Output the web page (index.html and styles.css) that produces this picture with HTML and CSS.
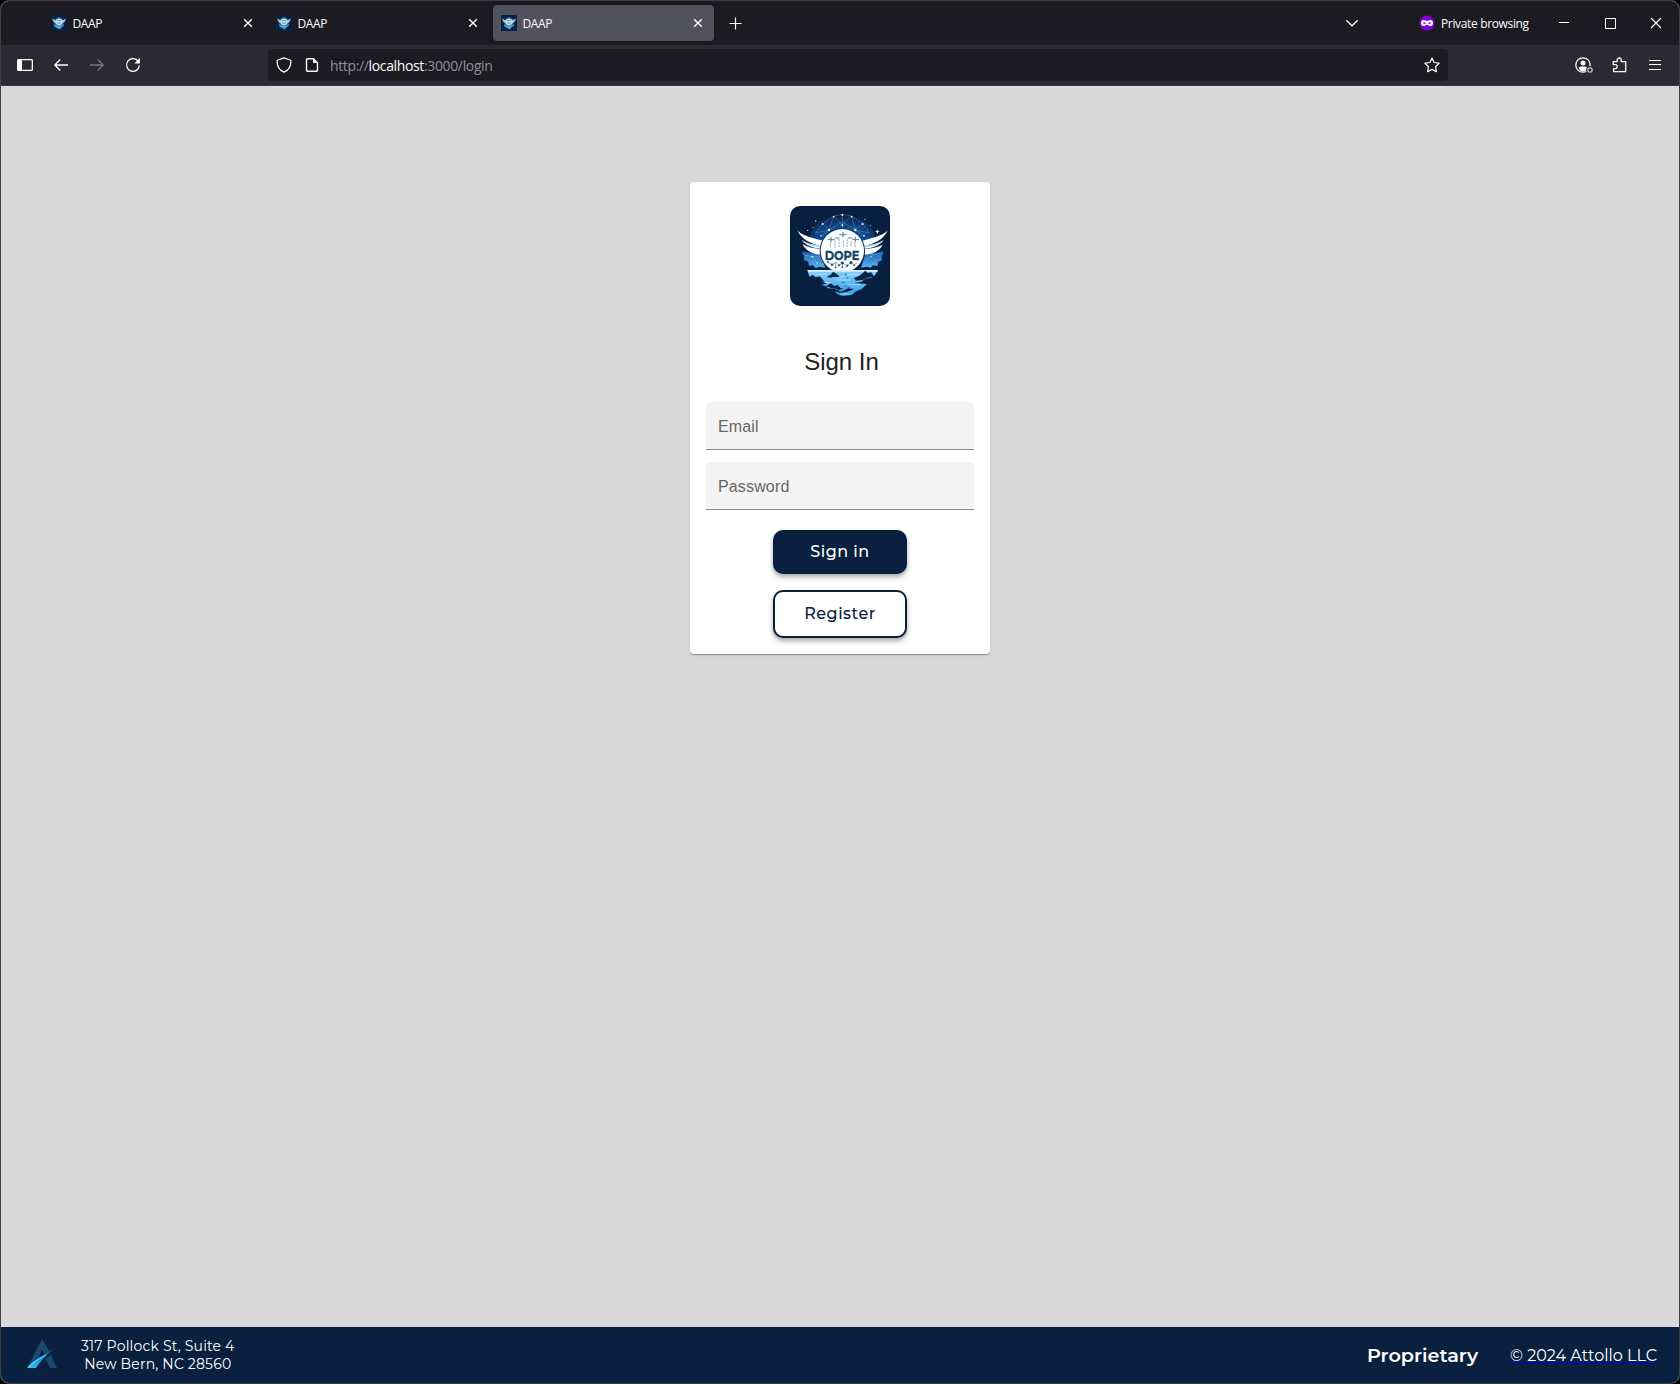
FILE: index.html
```html
<!DOCTYPE html>
<html lang="en">
<head>
<meta charset="utf-8">
<title>DAAP</title>
<link rel="stylesheet" href="styles.css">
</head>
<body>
<svg class="defs" width="0" height="0" aria-hidden="true">
  <symbol id="favicon" viewBox="0 0 16 16">
    <path fill="#08213f" d="M0 0h16v16H0z"/>
    <path fill="#1c5f96" d="M4 4l4-2.500L12 4l1 6-4 4H7l-4-4z"/>
    <path fill="#a9c5d8" d="M1 3.500l4 2h6l4-2-1.500 3.500L11 8.500H5L2.500 7z"/>
    <circle cx="8" cy="7" r="3.400" fill="#c5dbe6"/>
    <path fill="#4aa5dc" d="M3 9l2 1.500h6L13 9l-.5 2-2.500 1.500L9 14.500l-2-1L3.500 11.500z"/>
    <path stroke="#6f9ab5" d="M6 5.500h4M6 8h4"/>
  </symbol>
  <symbol id="close" viewBox="0 0 10 10"><path d="M1.200 1.200l7.600 7.600M8.800 1.200L1.200 8.800" fill="none" stroke="#fbfbfe" stroke-width="1.400"/></symbol>
</svg>
<div class="window">
  <header class="tabstrip">
    <div class="tabs">
      <div class="tab"><svg class="fav"><use href="#favicon"/></svg><span class="tab-label">DAAP</span><svg class="tab-close"><use href="#close"/></svg></div>
      <div class="tab"><svg class="fav"><use href="#favicon"/></svg><span class="tab-label">DAAP</span><svg class="tab-close"><use href="#close"/></svg></div>
      <div class="tab active"><svg class="fav"><use href="#favicon"/></svg><span class="tab-label">DAAP</span><svg class="tab-close"><use href="#close"/></svg></div>
      <svg class="new-tab" width="13" height="13" viewBox="0 0 13 13"><path d="M6.500.5v12M.5 6.500h12" stroke="#fbfbfe" stroke-width="1.200"/></svg>
    </div>
    <div class="controls">
      <svg class="chevron" width="14" height="8" viewBox="0 0 14 8"><path d="M1.200 1.200L7 6.800l5.800-5.600" fill="none" stroke="#fbfbfe" stroke-width="1.200"/></svg>
      <svg class="mask" width="16" height="16" viewBox="0 0 16 16"><circle cx="8" cy="8" r="7.500" fill="#8000d7"/><path fill="#fff" fill-rule="evenodd" d="M4.500 5C6 5 7 6 8 6s2-1 3.500-1S14 6 14 8s-1 3-2.500 3S9 9.700 8 9.700 6 11 4.500 11 2 10 2 8s1-3 2.500-3zM4 8.200c.7 1 2 1 2.700 0-.7-1.200-2-1.200-2.700 0zm5.300 0c.7 1 2 1 2.700 0-.7-1.200-2-1.200-2.700 0z"/></svg>
      <span class="private">Private browsing</span>
      <svg class="wc min" width="10" height="10" viewBox="0 0 10 10"><path d="M0 4.500h10" stroke="#fff"/></svg>
      <svg class="wc max" width="11" height="11" viewBox="0 0 11 11"><path d="M.5.5h10v10H.5z" fill="none" stroke="#fff"/></svg>
      <svg class="wc" width="12" height="12" viewBox="0 0 12 12"><path d="M1 1l10 10M11 1L1 11" stroke="#fff" stroke-width="1.100"/></svg>
    </div>
  </header>
  <nav class="toolbar">
    <div class="nav-icons">
      <svg width="16" height="16" viewBox="0 0 16 16"><path fill="#fbfbfe" fill-rule="evenodd" d="M1.500 2h13A1.500 1.500 0 0 1 16 3.500v9a1.500 1.500 0 0 1-1.500 1.500h-13A1.500 1.500 0 0 1 0 12.500v-9A1.500 1.500 0 0 1 1.500 2zM5 3.200v9.600h9.700V3.200z"/></svg>
      <svg width="16" height="16" viewBox="0 0 16 16"><path d="M15 8H1.800M7.300 2.500L1.800 8l5.500 5.500" fill="none" stroke="#fbfbfe" stroke-width="1.300"/></svg>
      <svg width="16" height="16" viewBox="0 0 16 16"><path d="M1 8h13.200M8.700 2.500L14.200 8l-5.500 5.500" fill="none" stroke="#77767e" stroke-width="1.300"/></svg>
      <svg width="16" height="16" viewBox="0 0 16 16"><path d="M13.300 4.300A6.400 6.400 0 1 0 14.400 8.500" fill="none" stroke="#fbfbfe" stroke-width="1.300"/><path fill="#fbfbfe" d="M15 .8v5.700H9.300z"/></svg>
    </div>
    <div class="urlbar">
      <svg width="16" height="16" viewBox="0 0 16 16"><path d="M8 .8l6 2.200c.7.300.9.600.9 1.200 0 4.500-2.500 9.100-6.900 11C3.600 13.300 1.100 8.700 1.100 4.200c0-.6.200-.9.900-1.200z" fill="none" stroke="#fbfbfe" stroke-width="1.300"/></svg>
      <svg class="page-icon" width="14" height="16" viewBox="0 0 14 16"><path d="M8.300 1.700H2.500a1 1 0 0 0-1 1v10.600a1 1 0 0 0 1 1h9a1 1 0 0 0 1-1V5.800z" fill="none" stroke="#fbfbfe" stroke-width="1.400"/><path fill="#fbfbfe" d="M8 1.500L12.800 6H8z"/></svg>
      <span class="url">http://<b>localhost</b>:3000/login</span>
      <svg class="star" width="16" height="16" viewBox="0 0 16 16"><path d="M8 1l2.100 4.500 5 .7-3.600 3.500.9 5L8 12.400l-4.400 2.300.9-5L.9 6.200l5-.7z" fill="none" stroke="#fbfbfe" stroke-width="1.200" stroke-linejoin="round"/></svg>
    </div>
    <div class="tools">
      <svg width="18" height="16" viewBox="0 0 18 16"><circle cx="8" cy="8" r="7.200" fill="none" stroke="#fbfbfe" stroke-width="1.300"/><circle cx="8" cy="6" r="2.500" fill="#fbfbfe"/><path fill="#fbfbfe" d="M3.500 10.500C5 9.200 11 9.200 12 10.500l-1 3-3 1-3-1z"/><circle cx="15" cy="13" r="3.800" fill="#2b2a33"/><circle cx="15" cy="13" r="2.200" fill="none" stroke="#c5c4ca" stroke-width="1.200"/></svg>
      <svg width="16" height="16" viewBox="0 0 16 16"><path d="M1.200 4.600h4V3a2 2 0 0 1 4 0v1.600h4.500v10.100H1.600v-3h1.600a2 2 0 0 0 0-4H1.200z" fill="none" stroke="#fbfbfe" stroke-width="1.300" stroke-linejoin="round"/></svg>
      <svg width="14" height="16" viewBox="0 0 14 16"><path d="M1 3.500h12M1 7.500h12M1 12.500h12" stroke="#fbfbfe" stroke-width="1.200"/></svg>
    </div>
  </nav>
  <main class="page">
    <form class="card">
      <svg class="logo" viewBox="30 30 300 300" role="img" aria-label="DOPE logo">
        <defs>
          <radialGradient id="dome" cx=".5" cy=".75" r=".72"><stop offset="0" stop-color="#1f73ca"/><stop offset=".55" stop-color="#0d4384"/><stop offset="1" stop-color="#08203f"/></radialGradient>
          <linearGradient id="sea" x1="0" y1="0" x2="0" y2="1"><stop offset="0" stop-color="#8bd0fb"/><stop offset="1" stop-color="#359ee9"/></linearGradient>
          <linearGradient id="cloud" x1="0" y1="0" x2="0" y2="1"><stop offset="0" stop-color="#195da7"/><stop offset="1" stop-color="#5ab5f7"/></linearGradient>
        </defs>
        <path fill="#08203f" d="M30 30h300v300H30z"/>
        <path fill="url(#dome)" d="M88 128C97 80 140 55 187 55s89 25 99 73l-32 23H120z"/>
        <path fill="none" stroke="#a2c7e6" stroke-opacity=".75" stroke-width="1.200" d="M107 111l21-27 33-24 26-5 28 5 33 23 20 28-42-9-39-24-40 24-40 9M128 84l19 18 14-42 26 27 28-27 11 42 22-19M187 55v60M147 102l-24 18M226 102l26 18"/>
        <g fill="#e5f4ff"><circle cx="187" cy="57" r="3"/><circle cx="128" cy="84" r="3"/><circle cx="147" cy="102" r="3.500"/><circle cx="161" cy="62" r="2.500"/><circle cx="215" cy="62" r="2.500"/><circle cx="226" cy="102" r="3.500"/><circle cx="248" cy="84" r="3"/><circle cx="187" cy="88" r="3"/><circle cx="107" cy="75" r="2"/><circle cx="255" cy="70" r="2"/><circle cx="272" cy="88" r="1.500"/><circle cx="99" cy="94" r="1.500"/><circle cx="83" cy="103" r="2"/><circle cx="123" cy="120" r="2.500"/><circle cx="252" cy="119" r="2.500"/></g>
        <path fill="#fff" d="M292 100l2 5 5 2-5 2-2 5-2-5-5-2 5-2z"/>
        <path fill="url(#cloud)" d="M67 166l55 10 14 39-18-3-11 4-8-8-12 1-2-12-14-6 2-12-7-5zM309 166l-54 10-12 39 17-3 12 3 7-7 13 2 3-13 11-5-1-13 5-5z"/>
        <path fill="none" stroke="#a8d7fb" d="M73 177l24 5 16 21M92 182l32-2M255 200l18-22 28-5"/>
        <g fill="#c7e8ff"><circle cx="97" cy="182" r="3"/><circle cx="79" cy="180" r="1.500"/><circle cx="273" cy="182" r="2"/><circle cx="111" cy="201" r="2"/></g>
        <path fill="#fff" d="M52 103c12 14 37 22 77 31l-4 25c-27-3-46-9-60-26 15 10 37 14 57 17-28-7-56-17-70-47zM323 103c-12 14-37 22-76 31l5 25c27-3 45-9 59-26-15 10-35 14-58 17 29-7 57-17 70-47z"/>
        <path fill="#a8d8f8" d="M65 131c16 12 39 15 58 18l-1 5c-27-2-45-10-57-23zM311 131c-16 12-39 15-58 18v5c27-2 46-10 58-23z"/>
        <path fill="#fff" d="M67 143c15 11 33 13 54 16l2 17c-22-2-45-9-56-33zM308 146c-15 9-35 11-53 13l-2 17c23-2 44-9 55-30z"/>
        <circle cx="187" cy="164" r="68" fill="#0b3159"/>
        <circle cx="187" cy="164" r="65" fill="#fff"/>
        <g fill="none" stroke="#477f9f" stroke-width="3"><path d="M178 116h22M189 108v17M144 131h20M153 123v15M217 130h20M226 122v16M165 126h13M203 126h14"/><path stroke="#789bae" stroke-width="2.500" d="M151 139v15M165 133v22M177 129v24M190 134v19M201 129v24M213 135v18M225 139v15" stroke-dasharray="7 2"/></g>
        <text x="134" y="191" textLength="104" lengthAdjust="spacingAndGlyphs" class="logo-text">DOPE</text>
        <g stroke="#174c70" stroke-width="1.500" fill="#174c70"><path fill="none" d="M144 198l12 8 11-7 10 9 10-7 15 8 10-10 10 8 9-7M167 199v14M187 201v12M203 207l-8 10"/><circle cx="144" cy="198" r="2"/><circle cx="156" cy="206" r="3"/><circle cx="177" cy="208" r="2.500"/><circle cx="187" cy="201" r="4"/><circle cx="202" cy="209" r="2.500"/><circle cx="213" cy="200" r="4"/><circle cx="223" cy="208" r="2"/><circle cx="167" cy="214" r="2"/><circle cx="187" cy="214" r="2"/></g>
        <path fill="url(#sea)" d="M82 223h211l-8 15-11 7-19 4-12 9-21 3 39 3-17 16-20 8-7 8-26 4-14-3-13-10 17-1-18-8-20-1-4-6-16-4 17-4-35-17-17-5z"/>
        <path fill="#d6f0ff" d="M82 222h211v5H84z"/>
        <path fill="#082344" d="M89 244l9-8 9 8 12-3 15 16-16-1-16-8zM140 243l12-7 8-9 17 12 3 5-17-2-12 3zM139 270l13-8 12 9 7-5 11 10 9 2-15 4-8-4-12-1zM222 246l17-7 17-15 8 7 9-2 10 13-19 3-17 7-20 2zM162 283l20 4 22-10 18 2-19 8-24 4z"/>
        <path fill="none" stroke="#d8f2ff" stroke-width="1.800" d="M109 235h28M189 236h45M171 252h39M135 260h19M203 266h39M180 294h31M174 243h18"/>
        <path fill="none" stroke="#1269a6" stroke-width="3" d="M193 235h8M199 246h6M186 259h8M203 274h7M193 270h6"/>
      </svg>
      <h1>Sign In</h1>
      <div class="field">Email</div>
      <div class="field">Password</div>
      <button type="button" class="btn primary">Sign in</button>
      <button type="button" class="btn outline">Register</button>
    </form>
  </main>
  <footer class="footer">
    <svg class="company" width="30" height="30" viewBox="0 0 30 30">
      <defs><linearGradient id="swoosh" x1="0" y1="1" x2="1" y2="0"><stop offset="0" stop-color="#35c6f5"/><stop offset=".5" stop-color="#168bd8"/><stop offset="1" stop-color="#12537c"/></linearGradient></defs>
      <path fill="#194b6c" d="M15 0L2 25l9.500-6L15 10.500l2.500 5 5-3.500zM18.500 19.500L24 16l6 13h-7z"/>
      <path fill="url(#swoosh)" d="M0 29C5 21.500 15 17 27.500 9.500 22 14 15 20 9 29z"/>
      <path fill="none" stroke="#8be6ff" stroke-width=".8" d="M1 28.500C6 23.500 12 20 19 16"/>
    </svg>
    <address><span>317 Pollock St, Suite 4</span><span>New Bern, NC 28560</span></address>
    <strong>Proprietary</strong>
    <a href="#">© 2024 Attollo LLC</a>
  </footer>
</div>
</body>
</html>
```
FILE: styles.css
```css
* { box-sizing: border-box; }
html, body { height: 100%; }
body { margin: 0; background: #000; overflow: hidden; font-family: "Liberation Sans", Arial, sans-serif; }
svg { display: block; flex: none; }
.defs { position: absolute; }
.window { height: 1384px; display: flex; flex-direction: column; border: 1px solid #3f3f40; border-radius: 9px; overflow: hidden; background: #d9d9d9; }

.tabstrip { height: 44px; flex: none; display: flex; justify-content: space-between; background: #1c1b22; color: #fbfbfe; font: 12px "Segoe UI", "Open Sans", sans-serif; }
.tabs { display: flex; align-items: center; gap: 4px; padding: 0 0 0 42px; }
.tab { width: 221px; height: 36px; padding: 0 11px 0 8px; display: flex; align-items: center; border-radius: 4px; }
.tab.active { background: #52525e; box-shadow: 0 0 4px rgba(0, 0, 0, .4); }
.fav { width: 16px; height: 16px; }
.tab-label { margin-left: 5.5px; flex: 1; letter-spacing: -.35px; }
.tab-close { width: 10px; height: 10px; }
.new-tab { margin: 1px 0 0 11px; }
.controls { display: flex; align-items: center; padding-right: 17px; }
.chevron { margin-right: 60px; }
.mask { margin-right: 6px; }
.private { width: 88px; margin-right: 30px; white-space: nowrap; letter-spacing: -.35px; }
.min { margin-right: 36px; }
.max { margin-right: 34px; }

.toolbar { height: 41px; flex: none; display: flex; align-items: center; padding-right: 17px; background: #2b2a33; border-bottom: 1px solid #38373f; }
.nav-icons { display: flex; gap: 20px; width: 267px; padding-left: 16px; }
.urlbar { width: 1180px; height: 32px; display: flex; align-items: center; padding: 0 8px; background: #1c1b22; border-radius: 4px; }
.page-icon { margin-left: 13px; }
.url { margin-left: 11px; flex: 1; color: #8f8f96; font: 14px "Segoe UI", "Open Sans", sans-serif; letter-spacing: -.36px; padding-top: 1px; }
.url b { font-weight: 400; color: #fbfbfe; }
.tools { display: flex; gap: 19px; margin-left: auto; }
.tools svg:last-child { margin-left: 1px; }

.page { flex: 1; padding-top: 96px; }
.card { width: 300px; height: 472px; margin: 0 auto; padding: 24px 16px 16px; display: flex; flex-direction: column; align-items: center; background: #fff; border-radius: 4px; box-shadow: 0 2px 1px -1px rgba(0, 0, 0, .2), 0 1px 1px rgba(0, 0, 0, .14), 0 1px 3px rgba(0, 0, 0, .12); }
.logo { width: 100px; height: 100px; border-radius: 10px; }
.logo-text { font: 700 38px Montserrat, Inter, sans-serif; fill: #104569; stroke: #104569; }
h1 { margin: 40px 0 24px; padding-left: 3px; font-size: 24px; line-height: 32px; font-weight: 400; color: #212121; }
.field { width: 268px; height: 48px; margin-bottom: 12px; padding: 1px 12px 0; line-height: 48px; font-size: 16px; letter-spacing: .15px; color: #666; background: linear-gradient(#8d8d8d, #8d8d8d) 0 100% / 100% 1px no-repeat #f4f4f4; border-radius: 4px 4px 0 0; }
.btn { width: 134px; display: flex; align-items: center; justify-content: center; border-radius: 10px; padding: 0 0 2px; font: 500 16px Montserrat, Inter, sans-serif; letter-spacing: .5px; box-shadow: 0 3px 5px rgba(0, 0, 0, .35); white-space: nowrap; }
.primary { height: 44px; margin-top: 8px; border: 0; background: #09203f; color: #fff; }
.outline { height: 48px; margin-top: 16px; border: 2px solid #09203f; background: #fff; color: #09203f; }

.footer { height: 56px; flex: none; display: flex; align-items: center; padding: 0 22px 0 26px; background: #09203f; color: #fff; font-family: Montserrat, Inter, sans-serif; white-space: nowrap; }
.company { margin-top: -3px; }
address { margin-left: 24px; display: flex; flex-direction: column; align-items: center; font-style: normal; font-size: 14px; line-height: 18px; letter-spacing: .19px; }
strong { margin: -1px 0 0 auto; font-size: 19.2px; font-weight: 600; }
.footer a { margin-left: 32px; color: #fff; font-size: 16px; text-decoration: underline #00e; text-underline-offset: 2px; }
```
